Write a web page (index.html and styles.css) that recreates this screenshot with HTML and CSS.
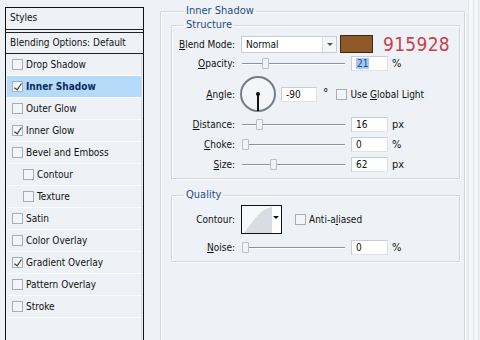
FILE: index.html
```html
<!DOCTYPE html>
<html lang="en">
<head>
    <meta charset="UTF-8">
    <title>Layer Style</title>
    <link rel="stylesheet" href="styles.css">
</head>
<body>
    <div class="dialog">
        <div class="styles">
            <div class="list">
                <div class="head">Styles</div>
                <div class="head blend">Blending Options: Default</div>
                <ul class="effects">
                    <li><span class="check"></span>Drop Shadow</li>
                    <li class="active"><span class="check on"></span>Inner Shadow</li>
                    <li><span class="check"></span>Outer Glow</li>
                    <li><span class="check on"></span>Inner Glow</li>
                    <li><span class="check"></span>Bevel and Emboss</li>
                    <li class="sub"><span class="check"></span>Contour</li>
                    <li class="sub"><span class="check"></span>Texture</li>
                    <li><span class="check"></span>Satin</li>
                    <li><span class="check"></span>Color Overlay</li>
                    <li><span class="check on"></span>Gradient Overlay</li>
                    <li><span class="check"></span>Pattern Overlay</li>
                    <li><span class="check"></span>Stroke</li>
                    <li class="empty"></li>
                </ul>
            </div>
        </div>

        <div class="options">
            <fieldset class="group outer">
                <legend>Inner Shadow</legend>

                <fieldset class="group structure">
                    <legend>Structure</legend>

                    <div class="row blend-row">
                        <label class="label"><u>B</u>lend Mode:</label>
                        <div class="select"><span>Normal</span><span class="arrow"></span></div>
                        <div class="swatch"></div>
                        <div class="hex">915928</div>
                    </div>

                    <div class="row">
                        <label class="label"><u>O</u>pacity:</label>
                        <div class="slider"><span class="thumb" style="left: 19%"></span></div>
                        <div class="field"><span class="selected">21</span></div>
                        <span class="unit">%</span>
                    </div>

                    <div class="row angle-row">
                        <label class="label"><u>A</u>ngle:</label>
                        <div class="dial"><span class="hand"></span></div>
                        <div class="field short">-90</div>
                        <span class="deg">&deg;</span>
                        <span class="check"></span>
                        <span class="opt">Use <u>G</u>lobal Light</span>
                    </div>

                    <div class="row">
                        <label class="label"><u>D</u>istance:</label>
                        <div class="slider"><span class="thumb" style="left: 14%"></span></div>
                        <div class="field">16</div>
                        <span class="unit">px</span>
                    </div>

                    <div class="row">
                        <label class="label"><u>C</u>hoke:</label>
                        <div class="slider"><span class="thumb" style="left: 0%"></span></div>
                        <div class="field">0</div>
                        <span class="unit">%</span>
                    </div>

                    <div class="row">
                        <label class="label"><u>S</u>ize:</label>
                        <div class="slider"><span class="thumb" style="left: 27%"></span></div>
                        <div class="field">62</div>
                        <span class="unit">px</span>
                    </div>
                </fieldset>

                <fieldset class="group quality">
                    <legend>Quality</legend>

                    <div class="row contour-row">
                        <label class="label">Contour:</label>
                        <div class="contour">
                            <svg width="30" height="27" viewBox="0 0 30 27">
                                <path d="M2 27 C 12 14, 18 3, 30 1 L30 27 Z" fill="#d8dde4"/>
                            </svg>
                            <span class="arrow"></span>
                        </div>
                        <span class="check"></span>
                        <span class="opt">Anti-a<u>l</u>iased</span>
                    </div>

                    <div class="row noise-row">
                        <label class="label"><u>N</u>oise:</label>
                        <div class="slider"><span class="thumb" style="left: 0%"></span></div>
                        <div class="field">0</div>
                        <span class="unit">%</span>
                    </div>
                </fieldset>
            </fieldset>
        </div>
        <div class="edge"></div>
    </div>
</body>
</html>
```

FILE: styles.css
```css
* {
    margin: 0;
    padding: 0;
    box-sizing: border-box;
}
body {
    background-color: #eef2f6;
    font-family: "DejaVu Sans Condensed", "DejaVu Sans", sans-serif;
    font-size: 10px;
    color: #111;
    overflow: hidden;
}
.dialog {
    display: flex;
    width: 480px;
    height: 340px;
    overflow: hidden;
}

/* left: styles list */
.styles {
    width: 150px;
    padding: 7px 0 0 5px;
}
.list {
    width: 139px;
    height: 345px;
    border: 1px solid #111;
    border-bottom: none;
    background-color: #eef2f6;
}
.head {
    height: 22px;
    line-height: 20px;
    padding-left: 4px;
    border-bottom: 1px solid #222;
}
.head.blend {
    margin-top: 2px;
    border-top: 1px solid #222;
    height: 22px;
}
.effects {
    list-style: none;
    padding: 0 1px;
}
.effects li {
    display: flex;
    align-items: center;
    height: 22px;
    padding-left: 5px;
    border-bottom: 1px solid #fbfcfd;
    border-right: 1px solid #d6dbe0;
}
.effects li.sub {
    padding-left: 16px;
}
.effects li.active {
    background-color: #b5dbf8;
    color: #0b2a66;
    font-weight: bold;
}
.effects li.empty {
    height: 40px;
    border-bottom: none;
}
.check {
    display: inline-block;
    position: relative;
    width: 11px;
    height: 11px;
    margin-right: 3px;
    border: 1px solid #a6aeb8;
    background-color: #f3f5f8;
    flex-shrink: 0;
}
.check.on::after {
    content: "";
    position: absolute;
    left: 3px;
    top: 0;
    width: 3px;
    height: 7px;
    border: solid #333;
    border-width: 0 1.5px 1.5px 0;
    transform: rotate(35deg);
}

/* right: options */
.options {
    flex: 1;
    padding: 4px 3px 0 10px;
}
.group {
    border: 1px solid #d3d8de;
    box-shadow: inset 1px 1px 0 #fff, 1px 1px 0 #fff;
}
.group legend {
    color: #1f4b87;
    font-size: 11px;
    line-height: 14px;
    padding: 0 2px;
}
.outer {
    height: 400px;
    padding: 0 4px 0 10px;
}
.outer > legend {
    margin-left: 13px;
}
.structure {
    padding: 0 0 5px 0;
}
.structure > legend {
    margin-left: 12px;
}
.quality {
    margin-top: 9px;
    padding: 3px 0 5px 0;
}
.quality > legend {
    margin-left: 12px;
}

.row {
    display: flex;
    align-items: center;
    height: 18px;
    margin-top: 2px;
}
.blend-row {
    margin-top: 3px;
}
.blend-row + .row {
    margin-top: 1px;
}
.angle-row {
    height: 38px;
    margin-top: 3px;
}
.contour-row {
    height: 29px;
    margin-top: 0;
}
.noise-row {
    margin-top: 4px;
}
.label {
    width: 63px;
    text-align: right;
    margin-right: 6px;
}

.select {
    display: flex;
    justify-content: space-between;
    align-items: center;
    width: 96px;
    height: 17px;
    padding-left: 4px;
    background-color: #fff;
    border: 1px solid #c5ccd4;
}
.select .arrow {
    width: 14px;
    height: 15px;
    border-left: 1px solid #dde2e8;
    background-color: #f4f6f9;
    position: relative;
}
.arrow::after {
    content: "";
    position: absolute;
    left: 4px;
    top: 6px;
    border: 3px solid transparent;
    border-top: 3px solid #555;
}
.swatch {
    width: 33px;
    height: 18px;
    margin-left: 3px;
    background-color: #915928;
    border: 1px solid #3a2a1a;
}
.hex {
    margin-left: 10px;
    font-size: 19px;
    color: #c9404a;
    letter-spacing: 0.3px;
}

.slider {
    position: relative;
    width: 103px;
    height: 11px;
    margin-left: 1px;
}
.slider::before {
    content: "";
    position: absolute;
    left: 0;
    right: 0;
    top: 5px;
    border-top: 1px solid #8a939c;
    border-bottom: 1px solid #fff;
}
.thumb {
    position: absolute;
    top: 0;
    width: 7px;
    height: 11px;
    background-color: #f1f3f6;
    border: 1px solid #b9c0c8;
    border-radius: 1px;
}
.field {
    width: 37px;
    height: 15px;
    margin-left: 6px;
    padding-left: 4px;
    line-height: 13px;
    background-color: #fff;
    border: 1px solid #dfe3e8;
    border-top-color: #c9ced5;
    border-left-color: #c9ced5;
}
.field.short {
    width: 36px;
    margin-left: 5px;
}
.selected {
    background-color: #a8c9ef;
    color: #1a4e9c;
    padding: 0 1px;
}
.unit {
    margin-left: 4px;
    font-size: 11px;
}
.deg {
    margin-left: 6px;
    align-self: flex-start;
    margin-top: 11px;
    font-size: 12px;
}
.angle-row .check {
    margin-left: 8px;
}
.dial {
    position: relative;
    width: 36px;
    height: 36px;
    margin-left: -1px;
    border: 2px solid #747d86;
    border-radius: 50%;
    background-color: #f3f5f8;
}
.dial::before {
    content: "";
    position: absolute;
    left: 14px;
    top: 14px;
    width: 4px;
    height: 4px;
    border-radius: 50%;
    background-color: #111;
}
.hand {
    position: absolute;
    left: 15px;
    top: 16px;
    width: 2px;
    height: 17px;
    background-color: #111;
}

.contour {
    display: flex;
    align-items: flex-end;
    position: relative;
    width: 41px;
    height: 29px;
    border: 1px solid #111;
    background-color: #f6f8fa;
}
.contour svg {
    display: block;
}
.contour .arrow {
    position: relative;
    width: 9px;
    height: 27px;
    background-color: #fff;
}
.contour .arrow::after {
    left: 1px;
    top: 10px;
    border-top-color: #111;
}
.contour-row .check {
    margin-left: 13px;
}

.edge {
    width: 12px;
    border-left: 1px solid #dfe4ea;
    box-shadow: inset 4px 0 0 #f6f8fa, inset 5px 0 0 #dde2e8, inset 9px 0 0 #f4f6f9, inset 10px 0 0 #dfe3e8;
}
```
